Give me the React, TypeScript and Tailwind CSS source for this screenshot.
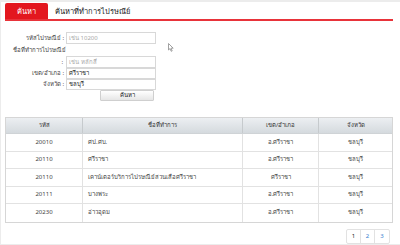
const rows = [
  { code: "20010", name: "ศป.ศบ.", district: "อ.ศรีราชา", province: "ชลบุรี" },
  { code: "20110", name: "ศรีราชา", district: "อ.ศรีราชา", province: "ชลบุรี" },
  { code: "20110", name: "เคาน์เตอร์บริการไปรษณีย์สวนเสือศรีราชา", district: "ศรีราชา", province: "ชลบุรี" },
  { code: "20111", name: "บางพระ", district: "อ.ศรีราชา", province: "ชลบุรี" },
  { code: "20230", name: "อ่าวอุดม", district: "อ.ศรีราชา", province: "ชลบุรี" },
];

const App = () => {
  return (
    <div className="relative w-[400px] h-[245px] overflow-hidden bg-white border-t-2 border-l border-b border-[#ececec] font-['Tahoma','Noto_Sans','DejaVu_Sans',sans-serif] text-[6px] text-[#444]">
      {/* Tabs */}
      <div className="flex items-end ml-[4px] mr-[7px] mt-[1px] border-b-2 border-[#e8333a] text-[7.5px]">
        <div className="shrink-0 px-[12px] py-[4px] leading-[8px] bg-[#e3171f] text-white rounded-t-[2px]">
          ค้นหา
        </div>
        <div className="py-[4px] leading-[8px] ml-[7px] text-[#222]">ค้นหาที่ทำการไปรษณีย์</div>
      </div>

      {/* Search form */}
      <div className="flex flex-col mt-[11px] ml-[4px]">
        <div className="flex items-center h-[12px]">
          <span className="w-[61px] text-right pr-[2px]">รหัสไปรษณีย์ :</span>
          <div className="w-[90px] h-[12px] border border-[#d8d8d8] flex items-center pl-[2px] text-[#aaa]">เช่น 10200</div>
        </div>
        <div className="mt-[1px] ml-[8px] h-[10px] leading-[10px]">ชื่อที่ทำการไปรษณีย์</div>
        <div className="flex items-center h-[12px] mt-[1px]">
          <span className="w-[61px] text-right pr-[3px]">:</span>
          <div className="w-[90px] h-[12px] border border-[#d8d8d8] flex items-center pl-[2px] text-[#aaa]">เช่น หลักสี่</div>
        </div>
        <div className="flex items-center h-[11px]">
          <span className="w-[61px] text-right pr-[2px]">เขต/อำเภอ :</span>
          <div className="w-[90px] h-[11px] border border-[#d8d8d8] flex items-center pl-[2px] text-[#222]">ศรีราชา</div>
        </div>
        <div className="flex items-center h-[11px]">
          <span className="w-[61px] text-right pr-[2px]">จังหวัด :</span>
          <div className="w-[90px] h-[11px] border border-[#d8d8d8] flex items-center pl-[2px] text-[#222]">ชลบุรี</div>
        </div>
        <div className="flex ml-[95px]">
          <button className="w-[54px] h-[11px] border border-[#cfcfcf] rounded-[1px] bg-gradient-to-b from-white to-[#e6e6e6] flex items-center justify-center text-[#222]">
            ค้นหา
          </button>
        </div>
      </div>

      {/* Result table */}
      <div className="ml-[4px] mr-[7px] mt-[16px] border border-[#d6d6d6]">
        <div className="grid grid-cols-[77px_160px_76px_1fr] h-[16px] bg-gradient-to-b from-[#eceff2] to-[#d5dade] border-b border-[#cfd3d6] text-[#333]">
          <div className="flex items-center justify-center border-r border-[#c6cacd]">รหัส</div>
          <div className="flex items-center justify-center border-r border-[#c6cacd]">ชื่อที่ทำการ</div>
          <div className="flex items-center justify-center border-r border-[#c6cacd]">เขต/อำเภอ</div>
          <div className="flex items-center justify-center">จังหวัด</div>
        </div>
        {rows.map((r, i) => (
          <div
            key={i}
            className={`grid grid-cols-[77px_160px_76px_1fr] h-[17.5px] ${i < rows.length - 1 ? "border-b border-[#e2e2e2]" : ""}`}
          >
            <div className="flex items-center justify-center border-r border-[#e2e2e2]">{r.code}</div>
            <div className="flex items-center pl-[5px] border-r border-[#e2e2e2]">{r.name}</div>
            <div className="flex items-center justify-center border-r border-[#e2e2e2]">{r.district}</div>
            <div className="flex items-center justify-center">{r.province}</div>
          </div>
        ))}
      </div>

      {/* Pagination */}
      <div className="flex justify-end mr-[10px] mt-[6px]">
        <div className="flex border border-[#e2e2e2] rounded-[2px]">
          <span className="w-[14px] h-[13px] flex items-center justify-center text-[#222] border-r border-[#e2e2e2]">1</span>
          <span className="w-[14px] h-[13px] flex items-center justify-center text-[#3a7fd0] border-r border-[#e2e2e2]">2</span>
          <span className="w-[14px] h-[13px] flex items-center justify-center text-[#3a7fd0]">3</span>
        </div>
      </div>

      {/* mouse cursor */}
      <svg className="absolute left-[167px] top-[41px]" width="6" height="9" viewBox="0 0 6 9">
        <path d="M0.5 0.5 L0.5 7 L2 5.6 L3.2 8.3 L4.2 7.9 L3 5.2 L5.2 5.2 Z" fill="#fff" stroke="#8a8a8a" strokeWidth="0.8" />
      </svg>
    </div>
  );
};

export default App;
